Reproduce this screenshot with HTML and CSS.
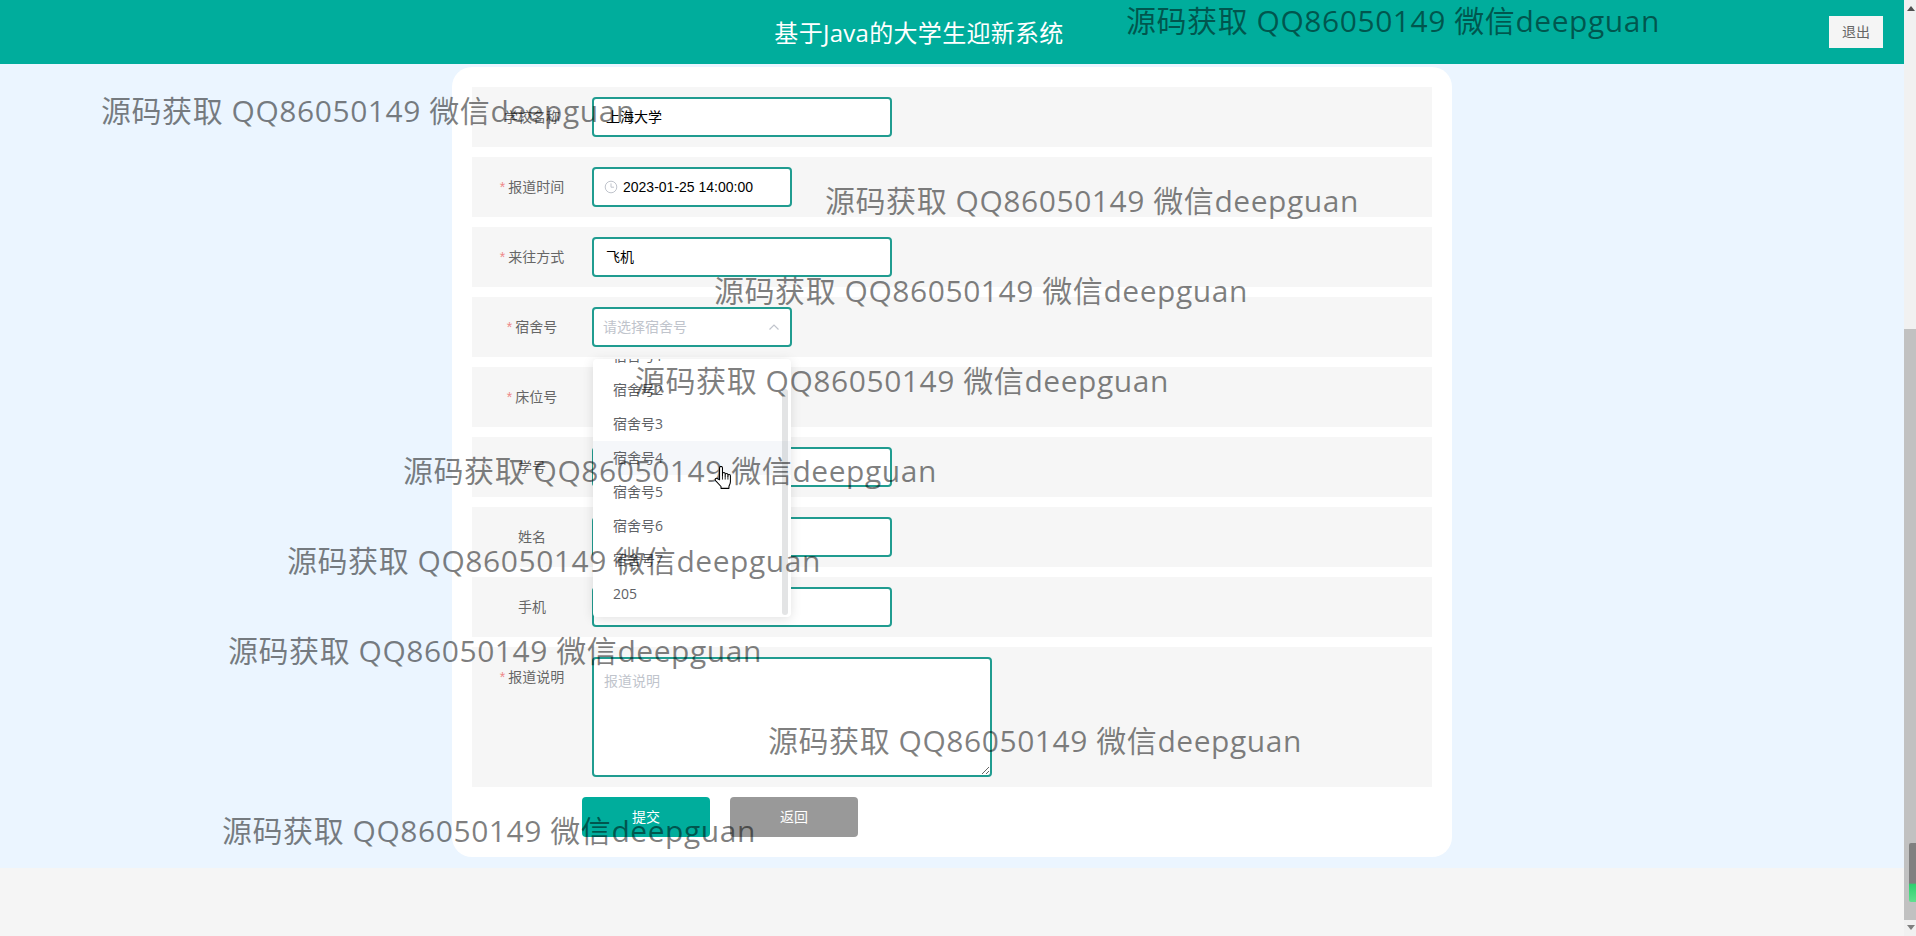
FILE: index.html
```html
<!DOCTYPE html>
<html lang="zh-CN">
<head>
<meta charset="utf-8">
<title>基于Java的大学生迎新系统</title>
<link rel="stylesheet" href="styles.css">
</head>
<body>
<div class="page">
  <div class="main">
    <header class="topbar">
      <h1 class="title">基于Java的大学生迎新系统</h1>
      <button class="logout" type="button">退出</button>
    </header>
    <section class="content">
      <form class="card">
        <div class="row">
          <label class="label">学校名称</label>
          <input class="field wide" type="text" value="上海大学" readonly>
        </div>
        <div class="row">
          <label class="label"><span class="req">*</span>报道时间</label>
          <div class="field narrow date">
            <svg class="clock" viewBox="0 0 14 14" width="14" height="14" aria-hidden="true"><circle cx="7" cy="7" r="5.8"/><path d="M7 3.4V7.2H10"/></svg>
            <span class="date-text">2023-01-25 14:00:00</span>
          </div>
        </div>
        <div class="row">
          <label class="label"><span class="req">*</span>来往方式</label>
          <input class="field wide" type="text" value="飞机" readonly>
        </div>
        <div class="row">
          <label class="label"><span class="req">*</span>宿舍号</label>
          <div class="select-wrap">
            <div class="field narrow select">
              <span class="placeholder">请选择宿舍号</span>
              <svg class="chevron" viewBox="0 0 12 8" width="12" height="8" aria-hidden="true"><path d="M1.5 6.5L6 2l4.5 4.5"/></svg>
            </div>
            <div class="dropdown">
              <ul class="options">
                <li>宿舍号1</li>
                <li>宿舍号2</li>
                <li>宿舍号3</li>
                <li class="hover">宿舍号4</li>
                <li>宿舍号5</li>
                <li>宿舍号6</li>
                <li>宿舍号7</li>
                <li>205</li>
              </ul>
              <div class="drop-thumb"></div>
            </div>
          </div>
        </div>
        <div class="row">
          <label class="label"><span class="req">*</span>床位号</label>
        </div>
        <div class="row">
          <label class="label">学号</label>
          <input class="field wide" type="text" readonly>
        </div>
        <div class="row">
          <label class="label">姓名</label>
          <input class="field wide" type="text" readonly>
        </div>
        <div class="row">
          <label class="label">手机</label>
          <input class="field wide" type="text" readonly>
        </div>
        <div class="row row-area">
          <label class="label"><span class="req">*</span>报道说明</label>
          <textarea class="field area" placeholder="报道说明"></textarea>
        </div>
        <div class="actions">
          <button class="btn submit" type="button">提交</button>
          <button class="btn back" type="button">返回</button>
        </div>
      </form>
    </section>
    <div class="bottom"></div>
  </div>
  <aside class="scrollbar">
    <div class="arrow up"></div>
    <div class="thumb"><div class="thumb-mark"></div></div>
    <div class="arrow down"></div>
  </aside>
</div>

<div class="wm wm1">源码获取 QQ86050149 微信deepguan</div>
<div class="wm wm2">源码获取 QQ86050149 微信deepguan</div>
<div class="wm wm3">源码获取 QQ86050149 微信deepguan</div>
<div class="wm wm4">源码获取 QQ86050149 微信deepguan</div>
<div class="wm wm5">源码获取 QQ86050149 微信deepguan</div>
<div class="wm wm6">源码获取 QQ86050149 微信deepguan</div>
<div class="wm wm7">源码获取 QQ86050149 微信deepguan</div>
<div class="wm wm8">源码获取 QQ86050149 微信deepguan</div>
<div class="wm wm9">源码获取 QQ86050149 微信deepguan</div>
<div class="wm wm10">源码获取 QQ86050149 微信deepguan</div>

<svg class="hand" viewBox="0 0 17 22" width="18" height="23" aria-hidden="true">
  <path class="hand-body" d="M5.2 13.2V1.8a1.4 1.4 0 0 1 2.8 0V9V7.6a1.3 1.3 0 0 1 2.6 0V9.5V8.4a1.3 1.3 0 0 1 2.6 0V10V9.4a1.2 1.2 0 0 1 2.4 0V15c0 2-.8 3-1.4 4.4V21.4H6.6v-1.8L1.6 14.2c-1.4-1.6.3-3.2 1.8-2z"/>
  <path class="hand-line" d="M8 9v4M10.6 9.5V13M13.2 10v3"/>
</svg>
</body>
</html>
```
FILE: styles.css
```css
* { box-sizing: border-box; }
html, body { margin: 0; height: 100%; overflow: hidden; }
body {
  font-family: "Liberation Sans", "Noto Sans CJK SC", sans-serif;
  font-size: 14px;
  color: #606266;
  background: #f5f5f5;
}
.page { display: flex; height: 936px; }
.main { flex: 1; display: flex; flex-direction: column; min-width: 0; }

.topbar {
  height: 64px;
  flex: none;
  display: flex;
  align-items: center;
  padding: 0 21px 0 9px;
  background: #00ad9c;
}
.title {
  flex: 1;
  margin: 0 0 2px;
  text-align: center;
  font-family: "Open Sans", "Noto Sans CJK SC", sans-serif;
  font-size: 24px;
  font-weight: 400;
  letter-spacing: .3px;
  color: #fff;
}
.logout {
  width: 54px;
  height: 32px;
  padding: 0 0 2px;
  border: 0;
  background: #f5f5f5;
  color: #666;
  font: inherit;
}

.content {
  flex: none;
  padding: 3px 0 11px;
  background: #ebf5ff;
}
.card {
  width: 1000px;
  margin: 0 auto;
  padding: 20px;
  background: #fff;
  border-radius: 20px;
}
.row {
  display: flex;
  align-items: center;
  height: 60px;
  margin-bottom: 10px;
  padding: 10px 0;
  background: #f6f6f6;
}
.row-area { height: 140px; align-items: flex-start; }
.label {
  flex: none;
  width: 120px;
  line-height: 40px;
  text-align: center;
  color: #666;
}
.req { color: #e88; margin-right: 3px; }

.field {
  height: 40px;
  border: 2px solid #209c90;
  border-radius: 4px;
  background: #fff;
  font-family: "Liberation Sans", "Noto Sans CJK SC", sans-serif;
  font-size: 14px;
  color: #000;
  outline: none;
}
.wide { width: 300px; padding: 0 12px 2px; }
.narrow { width: 200px; display: flex; align-items: center; }
.date { padding: 0 10px; gap: 5px; }
.clock { fill: none; stroke: #c0c4cc; stroke-width: 1; }
.date-text { color: #000; }

.select-wrap { position: relative; }
.select { justify-content: space-between; padding: 0 10px 2px 9px; }
.placeholder { color: #c0c4cc; }
.chevron { fill: none; stroke: #c0c4cc; stroke-width: 1.2; margin-top: 2px; }

.dropdown {
  position: absolute;
  top: 52px;
  left: 1px;
  width: 198px;
  height: 258px;
  overflow: hidden;
  background: #fff;
  box-shadow: 0 2px 12px rgba(0, 0, 0, .12);
  border-radius: 4px;
  z-index: 2;
}
.options {
  list-style: none;
  margin: -20px 0 0;
  padding: 0;
  font-family: "Open Sans", "Noto Sans CJK SC", sans-serif;
}
.options li {
  height: 34px;
  line-height: 34px;
  padding: 0 20px;
  color: #606266;
}
.options .hover { background: #f5f7fa; }
.drop-thumb {
  position: absolute;
  top: 30px;
  right: 3px;
  width: 6px;
  height: 226px;
  border-radius: 3px;
  background: rgba(144, 147, 153, .25);
}

.area {
  display: block;
  width: 400px;
  height: 120px;
  padding: 12px 10px 10px;
  line-height: 20px;
}
.area::placeholder { color: #c0c4cc; }

.actions { display: flex; gap: 20px; padding-left: 110px; height: 40px; }
.btn {
  width: 128px;
  height: 40px;
  padding: 0 0 2px;
  border: 0;
  border-radius: 4px;
  color: #fff;
  font: inherit;
}
.submit { background: #00ad9c; }
.back { background: #999; }

.bottom { flex: 1; background: #f5f5f5; }

.scrollbar {
  flex: none;
  width: 12px;
  display: flex;
  flex-direction: column;
  background: #f1f1f1;
}
.arrow { position: absolute; right: 1px; width: 0; height: 0; border-left: 4px solid transparent; border-right: 4px solid transparent; }
.arrow.up { top: 6px; border-bottom: 5px solid #505050; }
.arrow.down { bottom: 6px; border-top: 5px solid #808080; }
.thumb {
  margin-top: 329px;
  height: 591px;
  background: #c1c1c1;
  position: relative;
}
.thumb-mark {
  position: absolute;
  left: 5px;
  right: 0;
  top: 514px;
  height: 59px;
  border-radius: 2px 0 0 2px;
  background: linear-gradient(#808080 0, #808080 68%, #2fd06f 70%, #5fe08f 100%);
}

.wm {
  position: absolute;
  white-space: nowrap;
  font-family: "Open Sans", "Noto Sans CJK SC", sans-serif;
  font-size: 30px;
  line-height: 40px;
  letter-spacing: .55px;
  color: rgba(0, 0, 0, .5);
  pointer-events: none;
  z-index: 5;
}
.wm1 { left: 1126px; top: 1px; }
.wm2 { left: 101px; top: 91px; }
.wm3 { left: 825px; top: 181px; }
.wm4 { left: 714px; top: 271px; }
.wm5 { left: 635px; top: 361px; }
.wm6 { left: 403px; top: 451px; }
.wm7 { left: 287px; top: 541px; }
.wm8 { left: 228px; top: 631px; }
.wm9 { left: 768px; top: 721px; }
.wm10 { left: 222px; top: 811px; }

.hand { position: absolute; left: 714px; top: 466px; z-index: 6; }
.hand-body { fill: #fff; stroke: #000; stroke-width: 1; stroke-linejoin: round; }
.hand-line { fill: none; stroke: #000; stroke-width: .8; }
```
